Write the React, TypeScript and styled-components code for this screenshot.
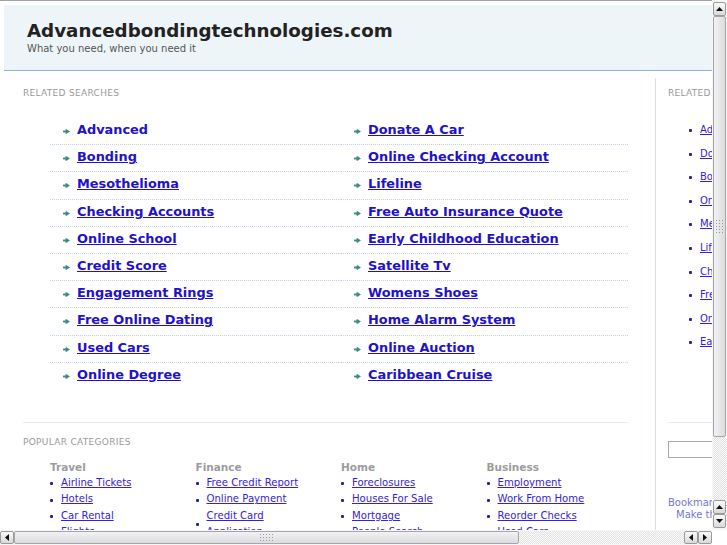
import React from "react";
import styled, { createGlobalStyle } from "styled-components";

const Global = createGlobalStyle`
  html, body { margin: 0; padding: 0; background: #fff; }
  body { font-family: "DejaVu Sans", Verdana, sans-serif; }
`;

const Window = styled.div`
  width: 727px;
  height: 545px;
  display: grid;
  grid-template-columns: 712px 15px;
  grid-template-rows: 530px 15px;
  overflow: hidden;
  background: #fff;
`;

const Viewport = styled.div`
  overflow: hidden;
  border-top: 1px solid #a3a3a3;
  box-sizing: border-box;
`;

const Page = styled.div`
  width: 800px;
  padding: 4px 0 0 4px;
`;

const Header = styled.header`
  box-sizing: border-box;
  height: 66px;
  padding: 15px 0 0 23px;
  background: #eef5f8;
  border-bottom: 1px solid #8fb1e3;
`;

const Title = styled.h1`
  margin: 0;
  font-size: 18.25px;
  line-height: 22px;
  font-weight: bold;
  color: #222;
`;

const Tagline = styled.div`
  margin-top: 1px;
  font-size: 10px;
  line-height: 12px;
  color: #555;
`;

const Body = styled.div`
  display: flex;
  margin-top: 7px;
`;

const Main = styled.main`
  box-sizing: border-box;
  width: 651px;
  padding: 9px 27px 0 19px;
`;

const Label = styled.div`
  font-size: 9px;
  line-height: 12px;
  letter-spacing: 0.3px;
  color: #999;
  text-transform: uppercase;
  white-space: nowrap;
`;

const LinkGrid = styled.div`
  display: grid;
  grid-template-columns: 291px 287px;
  margin: 19px 0 0 27px;
`;

const LinkColumn = styled.ul`
  list-style: none;
  margin: 0;
  padding: 0;
`;

const LinkRow = styled.li`
  box-sizing: border-box;
  height: 27.2px;
  padding: 4px 0 0 13px;
  display: flex;
  align-items: flex-start;
  border-bottom: 1px dotted #c3d2ea;
  &:last-child { border-bottom: none; }
`;

const Arrow = styled.svg`
  flex: none;
  width: 7px;
  height: 5px;
  margin: 7px 7px 0 0;
`;

const BigLink = styled.a<{ $plain?: boolean }>`
  font-size: 12.9px;
  line-height: 16px;
  font-weight: bold;
  color: #2211cc;
  text-decoration: ${(p) => (p.$plain ? "none" : "underline")};
  white-space: nowrap;
  cursor: pointer;
`;

const Popular = styled.section`
  margin-top: 32px;
  border-top: 1px solid #e3ebf7;
  padding-top: 13px;
`;

const CatGrid = styled.div`
  display: grid;
  grid-template-columns: repeat(4, 145.5px);
  margin: 11px 0 0 27px;
`;

const CatHeader = styled.div`
  font-size: 10.5px;
  line-height: 16px;
  font-weight: bold;
  color: #9c9c9c;
`;

const CatList = styled.ul`
  list-style: none;
  margin: 0;
  padding: 0;
`;

const CatItem = styled.li`
  display: flex;
  align-items: center;
`;

const Dot = styled.span`
  flex: none;
  width: 3px;
  height: 3px;
  border-radius: 1px;
  background: #2a1eb0;
  margin: 1px 8px 0 0;
`;

const SmallLink = styled.a`
  font-size: 10.1px;
  line-height: 16.5px;
  color: #3322dd;
  text-decoration: underline;
  max-width: 108px;
  cursor: pointer;
`;

const Sidebar = styled.aside`
  box-sizing: border-box;
  width: 148px;
  border-left: 1px solid #d3def2;
  padding: 9px 0 0 12px;
`;

const SideList = styled.ul`
  list-style: none;
  margin: 19.2px 0 0;
  padding: 0 0 0 21px;
`;

const SideItem = styled.li`
  height: 23.6px;
  display: flex;
  align-items: center;
`;

const SideLink = styled.a`
  font-size: 10px;
  line-height: 14px;
  color: #3322dd;
  text-decoration: underline;
  white-space: nowrap;
  cursor: pointer;
`;

const SideBlock = styled.div`
  margin-top: 67.8px;
  border-top: 1px solid #e3ebf7;
  padding-top: 18px;
`;

const SearchInput = styled.input`
  box-sizing: border-box;
  display: block;
  width: 124px;
  height: 17px;
  margin: 0;
  border: 1px solid #a9a9a9;
  background: #fff;
`;

const Bookmark = styled.div`
  margin-top: 39px;
`;

const BookmarkLine = styled.div<{ $indent?: number }>`
  font-size: 10px;
  line-height: 12.5px;
  color: #7575cf;
  white-space: nowrap;
  padding-left: ${(p) => p.$indent ?? 0}px;
`;

/* ---------- scrollbars ---------- */

const VBar = styled.div`
  box-sizing: border-box;
  display: flex;
  flex-direction: column;
  padding: 2px 1px 2px 1px;
  background: #f6f6f6;
`;

const HBar = styled.div`
  box-sizing: border-box;
  display: flex;
  padding: 1px 0;
  background: #f6f6f6;
`;

const Corner = styled.div`
  background: #fff;
`;

const SBButton = styled.div<{ $vertical?: boolean }>`
  box-sizing: border-box;
  flex: none;
  width: ${(p) => (p.$vertical ? "13px" : "14px")};
  height: ${(p) => (p.$vertical ? "14px" : "13px")};
  border: 1px solid #9a9a9a;
  border-radius: 2px;
  background: linear-gradient(#fbfbfb, #d9d9d9);
  display: flex;
  align-items: center;
  justify-content: center;
`;

const Thumb = styled.div<{ $vertical?: boolean }>`
  box-sizing: border-box;
  flex: none;
  border: 1px solid #a6a6a6;
  border-radius: 2px;
  background: ${(p) =>
    p.$vertical
      ? "linear-gradient(to right, #f2f2f4, #dcdcde)"
      : "linear-gradient(#f2f2f4, #dcdcde)"};
  display: flex;
  align-items: center;
  justify-content: center;
`;

const Grip = styled.div<{ $w: number; $h: number }>`
  width: ${(p) => p.$w}px;
  height: ${(p) => p.$h}px;
  background: radial-gradient(circle, #9a9a9a 0.7px, transparent 0.9px) 0 0 / 3px 3px;
`;

const Trough = styled.div`
  flex: 1;
  background: repeating-conic-gradient(#e2e2e2 0 25%, #fafafa 0 50%) 0 0 / 2px 2px;
`;

type Dir = "up" | "down" | "left" | "right";
const Tri = ({ dir }: { dir: Dir }) => {
  const pts: Record<Dir, string> = {
    up: "0,4 3.5,0 7,4",
    down: "0,0 7,0 3.5,4",
    left: "4,0 4,7 0,3.5",
    right: "0,0 0,7 4,3.5",
  };
  const vertical = dir === "up" || dir === "down";
  return (
    <svg width={vertical ? 7 : 4} height={vertical ? 4 : 7} viewBox={vertical ? "0 0 7 4" : "0 0 4 7"}>
      <polygon points={pts[dir]} fill="#111" />
    </svg>
  );
};

const TealArrow = () => (
  <Arrow viewBox="0 0 7 5">
    <rect x="0" y="1.6" width="3.5" height="1.8" fill="#3d8a84" />
    <rect x="1.9" y="0.4" width="1.6" height="4.2" fill="#3d8a84" opacity="0.55" />
    <polygon points="3,0 7,2.5 3,5" fill="#3d8a84" />
  </Arrow>
);

const leftLinks = [
  "Advanced",
  "Bonding",
  "Mesothelioma",
  "Checking Accounts",
  "Online School",
  "Credit Score",
  "Engagement Rings",
  "Free Online Dating",
  "Used Cars",
  "Online Degree",
];
const rightLinks = [
  "Donate A Car",
  "Online Checking Account",
  "Lifeline",
  "Free Auto Insurance Quote",
  "Early Childhood Education",
  "Satellite Tv",
  "Womens Shoes",
  "Home Alarm System",
  "Online Auction",
  "Caribbean Cruise",
];

const sideLinks = [
  "Advanced",
  "Donate A Car",
  "Bonding",
  "Online Checking Account",
  "Mesothelioma",
  "Lifeline",
  "Checking Accounts",
  "Free Auto Insurance Quote",
  "Online School",
  "Early Childhood Education",
];

const categories = [
  { name: "Travel", items: ["Airline Tickets", "Hotels", "Car Rental", "Flights", "Cheap Tickets"] },
  { name: "Finance", items: ["Free Credit Report", "Online Payment", "Credit Card Application", "Insurance", "Loans"] },
  { name: "Home", items: ["Foreclosures", "Houses For Sale", "Mortgage", "People Search", "Home Security"] },
  { name: "Business", items: ["Employment", "Work From Home", "Reorder Checks", "Used Cars", "Small Business"] },
];

export default function App() {
  return (
    <>
      <Global />
      <Window>
        <Viewport>
          <Page>
            <Header>
              <Title>Advancedbondingtechnologies.com</Title>
              <Tagline>What you need, when you need it</Tagline>
            </Header>
            <Body>
              <Main>
                <Label>Related Searches</Label>
                <LinkGrid>
                  {[leftLinks, rightLinks].map((col, ci) => (
                    <LinkColumn key={ci}>
                      {col.map((t, i) => (
                        <LinkRow key={t}>
                          <TealArrow />
                          <BigLink $plain={ci === 0 && i === 0}>{t}</BigLink>
                        </LinkRow>
                      ))}
                    </LinkColumn>
                  ))}
                </LinkGrid>
                <Popular>
                  <Label>Popular Categories</Label>
                  <CatGrid>
                    {categories.map((c) => (
                      <div key={c.name}>
                        <CatHeader>{c.name}</CatHeader>
                        <CatList>
                          {c.items.map((it) => (
                            <CatItem key={it}>
                              <Dot />
                              <SmallLink>{it}</SmallLink>
                            </CatItem>
                          ))}
                        </CatList>
                      </div>
                    ))}
                  </CatGrid>
                </Popular>
              </Main>
              <Sidebar>
                <Label>Related Searches</Label>
                <SideList>
                  {sideLinks.map((t) => (
                    <SideItem key={t}>
                      <Dot />
                      <SideLink>{t}</SideLink>
                    </SideItem>
                  ))}
                </SideList>
                <SideBlock>
                  <SearchInput type="text" aria-label="search" />
                  <Bookmark>
                    <BookmarkLine>Bookmark this page</BookmarkLine>
                    <BookmarkLine $indent={8}>Make this your homepage</BookmarkLine>
                  </Bookmark>
                </SideBlock>
              </Sidebar>
            </Body>
          </Page>
        </Viewport>
        <VBar>
          <SBButton $vertical><Tri dir="up" /></SBButton>
          <Thumb $vertical style={{ height: 421 }}>
            <Grip $w={10} $h={15} />
          </Thumb>
          <Trough />
          <SBButton $vertical><Tri dir="up" /></SBButton>
          <SBButton $vertical><Tri dir="down" /></SBButton>
        </VBar>
        <HBar>
          <SBButton><Tri dir="left" /></SBButton>
          <Thumb style={{ width: 505 }}>
            <Grip $w={16} $h={9} />
          </Thumb>
          <Trough />
          <SBButton><Tri dir="left" /></SBButton>
          <SBButton><Tri dir="right" /></SBButton>
        </HBar>
        <Corner />
      </Window>
    </>
  );
}
